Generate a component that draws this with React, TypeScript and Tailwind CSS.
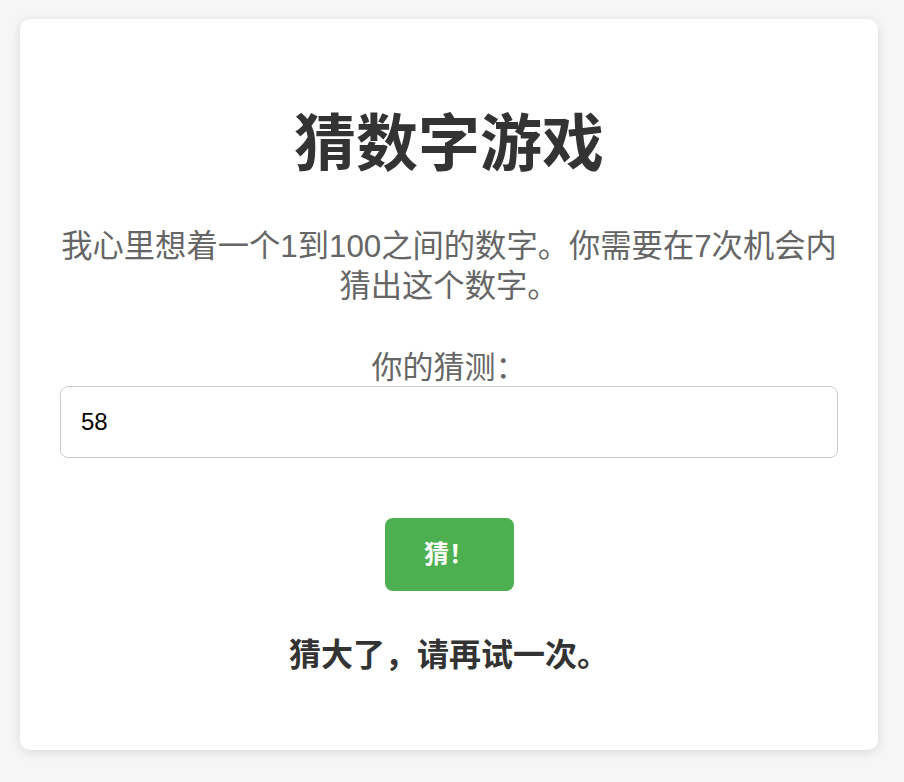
import React, { useState } from "react";

export default function App() {
  const [guess, setGuess] = useState("58");

  return (
    <div className="min-h-[782px] bg-[#f6f6f6] px-[20px] pt-[19px] pb-[32px] font-['Liberation_Sans','Noto_Sans_CJK_SC',sans-serif]">
      <div className="w-[858px] bg-white rounded-[10px] shadow-[0_2px_12px_rgba(0,0,0,0.12)] px-10 pt-10 pb-[75px] flex flex-col items-center text-center">
        <h1 className="mt-[46px] text-[62px] leading-[80px] font-bold text-[#333]">
          猜数字游戏
        </h1>
        <p className="mt-[42px] text-[31.3px] leading-[40px] text-[#666]">
          我心里想着一个1到100之间的数字。你需要在7次机会内
          <br />
          猜出这个数字。
        </p>
        <label
          htmlFor="guess"
          className="mt-[43px] text-[31px] leading-[36px] text-[#666]"
        >
          你的猜测：
        </label>
        <input
          id="guess"
          type="number"
          value={guess}
          onChange={(e) => setGuess(e.target.value)}
          className="w-full h-[72px] border border-[#ccc] rounded-lg px-5 text-[24px] text-black font-['Liberation_Sans',sans-serif] outline-none [appearance:textfield] [&::-webkit-inner-spin-button]:appearance-none"
        />
        <button className="mt-[60px] w-[129px] h-[73px] bg-[#4caf50] rounded-lg text-white text-[25px] font-bold">
          猜！
        </button>
        <p className="mt-[44px] text-[32px] leading-[40px] font-bold text-[#333]">
          猜大了，请再试一次。
        </p>
      </div>
    </div>
  );
}
